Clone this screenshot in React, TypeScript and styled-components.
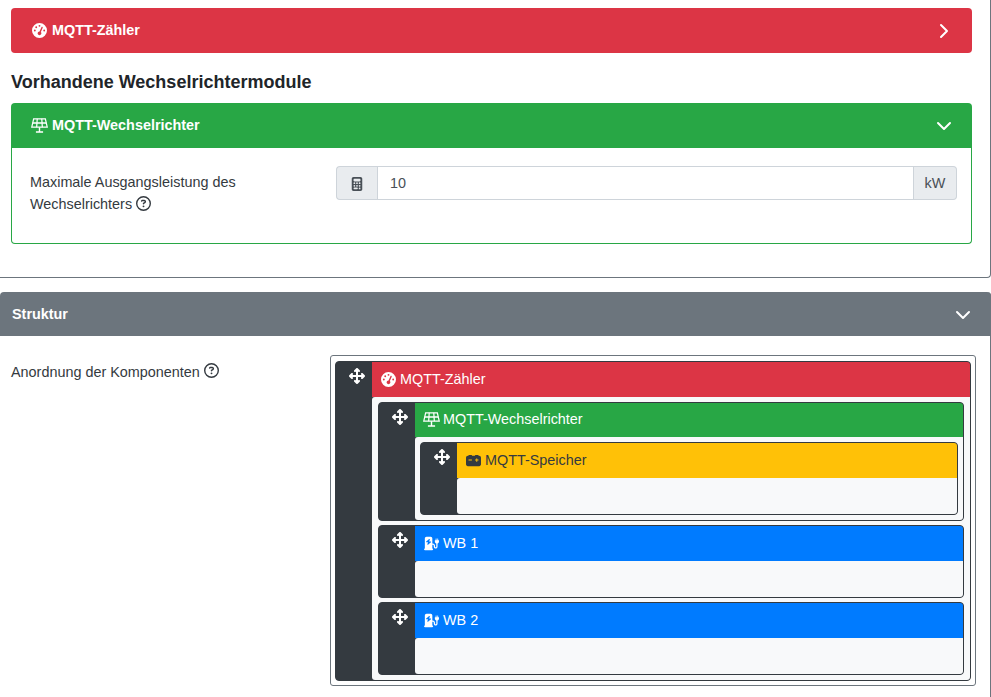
import React from "react";
import styled, { createGlobalStyle } from "styled-components";
import { ChevronDown, ChevronRight } from "lucide-react";
import {
  FaArrowsUpDownLeftRight,
  FaCalculator,
  FaCarBattery,
  FaChargingStation,
  FaGaugeHigh,
  FaRegCircleQuestion,
} from "react-icons/fa6";

type Farbe = "danger" | "success" | "warning" | "primary";

const farben: Record<Farbe, { bg: string; fg: string }> = {
  danger: { bg: "#dc3545", fg: "#fff" },
  success: { bg: "#28a745", fg: "#fff" },
  warning: { bg: "#ffc107", fg: "#343a40" },
  primary: { bg: "#007bff", fg: "#fff" },
};

const SolarIcon = () => (
  <svg width="17" height="15" viewBox="0 0 18 15" preserveAspectRatio="none" fill="none" stroke="currentColor" strokeWidth="1.3">
    <path d="M2.8.8h12.4l2 8.4H.8z" />
    <path d="M6.6.8 6 9.2M11.4.8l.6 8.4M1.8 5h14.4" />
    <path d="M9 9.2v4.4M5.2 13.9h7.6" strokeWidth="1.5" />
  </svg>
);

type Knoten = {
  name: string;
  farbe: Farbe;
  icon: React.ReactNode;
  kinder?: Knoten[];
};

const baum: Knoten = {
  name: "MQTT-Zähler",
  farbe: "danger",
  icon: <FaGaugeHigh size={15} />,
  kinder: [
    {
      name: "MQTT-Wechselrichter",
      farbe: "success",
      icon: <SolarIcon />,
      kinder: [
        {
          name: "MQTT-Speicher",
          farbe: "warning",
          icon: <FaCarBattery size={15} />,
        },
      ],
    },
    { name: "WB 1", farbe: "primary", icon: <FaChargingStation size={15} /> },
    { name: "WB 2", farbe: "primary", icon: <FaChargingStation size={15} /> },
  ],
};

const BaumZeile = ({ knoten, tiefe = 0 }: { knoten: Knoten; tiefe?: number }) => (
  <Zeile>
    <Griff>
      <FaArrowsUpDownLeftRight size={16} />
    </Griff>
    <ZeileInhalt>
      <ZeileKopf $farbe={knoten.farbe}>
        <ZeileIcon>{knoten.icon}</ZeileIcon>
        {knoten.name}
      </ZeileKopf>
      <ZeileKoerper $leer={!knoten.kinder} $tiefe={tiefe}>
        {knoten.kinder?.map((kind) => (
          <BaumZeile key={kind.name} knoten={kind} tiefe={tiefe + 1} />
        ))}
      </ZeileKoerper>
    </ZeileInhalt>
  </Zeile>
);

const App = () => {
  return (
    <>
      <GlobalStyle />
      <Seite>
        <ObereKarte>
          <ModulKopf $farbe="danger" $geschlossen>
            <KopfTitel>
              <KopfIcon>
                <FaGaugeHigh size={15} />
              </KopfIcon>
              MQTT-Zähler
            </KopfTitel>
            <ChevronRight size={24} />
          </ModulKopf>
          <Ueberschrift>Vorhandene Wechselrichtermodule</Ueberschrift>
          <ModulKopf $farbe="success">
            <KopfTitel>
              <KopfIcon>
                <SolarIcon />
              </KopfIcon>
              MQTT-Wechselrichter
            </KopfTitel>
            <ChevronDown size={24} />
          </ModulKopf>
          <ModulKoerper>
            <Bezeichnung>
              Maximale Ausgangsleistung des Wechselrichters{" "}
              <FaRegCircleQuestion size={15} />
            </Bezeichnung>
            <Eingabegruppe>
              <Zusatz $links>
                <FaCalculator size={14} />
              </Zusatz>
              <Eingabe type="text" defaultValue="10" />
              <Zusatz>kW</Zusatz>
            </Eingabegruppe>
          </ModulKoerper>
        </ObereKarte>

        <StrukturKarte>
          <StrukturKopf>
            Struktur
            <ChevronDown size={24} />
          </StrukturKopf>
          <StrukturKoerper>
            <StrukturLabel>
              Anordnung der Komponenten <FaRegCircleQuestion size={15} />
            </StrukturLabel>
            <BaumRahmen>
              <BaumZeile knoten={baum} />
            </BaumRahmen>
          </StrukturKoerper>
        </StrukturKarte>
      </Seite>
    </>
  );
};

export default App;

const GlobalStyle = createGlobalStyle`
  html, body {
    margin: 0;
    height: 697px;
    overflow: hidden;
    background: #fff;
  }
  body {
    font-family: "Liberation Sans", Arial, sans-serif;
    font-size: 14.4px;
    line-height: 21.6px;
    color: #212529;
  }
  * {
    box-sizing: border-box;
  }
`;

const Seite = styled.div`
  width: 991px;
  display: flex;
  flex-direction: column;
  gap: 14px;
`;

const ObereKarte = styled.div`
  height: 278px;
  padding: 8px 18px 0 11px;
  border-right: 1px solid #6c757d;
  border-bottom: 1px solid #6c757d;
  border-bottom-right-radius: 4px;
`;

const ModulKopf = styled.div<{ $farbe: Farbe; $geschlossen?: boolean }>`
  height: 45px;
  padding: 0 16px 0 20px;
  display: flex;
  align-items: center;
  justify-content: space-between;
  background: ${(p) => farben[p.$farbe].bg};
  color: ${(p) => farben[p.$farbe].fg};
  font-weight: 700;
  border-radius: ${(p) => (p.$geschlossen ? "4px" : "4px 4px 0 0")};
`;

const KopfTitel = styled.div`
  display: flex;
  align-items: center;
  gap: 4px;
`;

const KopfIcon = styled.span`
  width: 17px;
  display: inline-flex;
  justify-content: center;
`;

const Ueberschrift = styled.h3`
  margin: 19px 0 10px;
  font-size: 18px;
  line-height: 21px;
  font-weight: 700;
`;

const ModulKoerper = styled.div`
  height: 96px;
  padding: 18px 14px 0 18px;
  display: flex;
  gap: 14px;
  border: 1px solid #28a745;
  border-top: none;
  border-radius: 0 0 4px 4px;
`;

const Bezeichnung = styled.div`
  width: 292px;
  padding-top: 6px;
  color: #343a40;
  svg {
    vertical-align: -2px;
  }
`;

const Eingabegruppe = styled.div`
  flex: 1;
  height: 34px;
  display: flex;
`;

const Zusatz = styled.div<{ $links?: boolean }>`
  display: flex;
  align-items: center;
  justify-content: center;
  width: ${(p) => (p.$links ? "41px" : "43px")};
  padding-top: 1px;
  background: #e9ecef;
  color: #495057;
  border: 1px solid #ced4da;
  border-radius: ${(p) => (p.$links ? "4px 0 0 4px" : "0 4px 4px 0")};
  ${(p) => (p.$links ? "border-right: none;" : "border-left: none;")}
`;

const Eingabe = styled.input`
  flex: 1;
  min-width: 0;
  padding: 1px 12px 0;
  border: 1px solid #ced4da;
  font: inherit;
  color: #495057;
  outline: none;
`;

const StrukturKarte = styled.div`
  border-right: 1px solid #6c757d;
  border-top-left-radius: 4px;
  border-top-right-radius: 4px;
`;

const StrukturKopf = styled.div`
  height: 44px;
  margin-right: -1px;
  padding: 1px 16px 0 12px;
  display: flex;
  align-items: center;
  justify-content: space-between;
  background: #6c757d;
  color: #fff;
  font-weight: 700;
  border-radius: 4px 4px 0 0;
`;

const StrukturKoerper = styled.div`
  padding: 19px 14px 30px 11px;
  display: flex;
`;

const StrukturLabel = styled.div`
  width: 319px;
  padding-top: 7px;
  color: #343a40;
  svg {
    vertical-align: -1px;
  }
`;

const BaumRahmen = styled.div`
  width: 646px;
  height: 331px;
  padding: 5px 4px 4px 4px;
  border: 1px solid #6c757d;
  border-radius: 3px;
`;

const Zeile = styled.div`
  display: flex;
  background: #343a40;
  border: 1px solid #343a40;
  border-radius: 4px;
  & + & {
    margin-top: 4.5px;
  }
`;

const Griff = styled.div`
  flex: 0 0 36px;
  padding: 6px 0 0 5px;
  display: flex;
  justify-content: center;
  align-items: flex-start;
  color: #fff;
`;

const ZeileInhalt = styled.div`
  flex: 1;
  display: flex;
  flex-direction: column;
`;

const ZeileKopf = styled.div<{ $farbe: Farbe }>`
  height: 34.6px;
  padding-left: 5px;
  display: flex;
  align-items: center;
  background: ${(p) => farben[p.$farbe].bg};
  color: ${(p) => farben[p.$farbe].fg};
  border-radius: 0 3px 0 0;
`;

const ZeileIcon = styled.span`
  width: 23px;
  padding-right: 1px;
  display: inline-flex;
  justify-content: center;
`;

const ZeileKoerper = styled.div<{ $leer: boolean; $tiefe: number }>`
  min-height: 36px;
  padding: ${(p) => {
    const seite = p.$tiefe === 0 ? 6 : 5;
    return p.$leer ? "0" : `5px ${seite}px 5px ${seite}px`;
  }};
  flex: 1;
  background: #f8f9fa;
  border-radius: 3px 0 3px 3px;
`;
